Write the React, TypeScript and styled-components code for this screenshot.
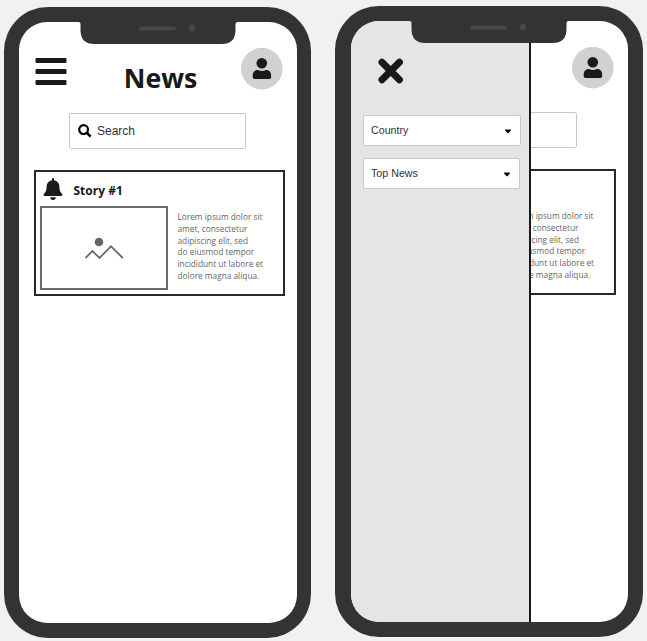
import React from "react";
import styled, { createGlobalStyle } from "styled-components";

const GlobalStyle = createGlobalStyle`
  * { box-sizing: border-box; }
  body { margin: 0; background: #f1f1f1; overflow: hidden; }
`;

const Board = styled.main`
  display: flex;
  align-items: flex-start;
  gap: 24px;
  width: 647px;
  height: 641px;
  padding: 7px 0 0 4px;
  background: #f1f1f1;
`;

const Frame = styled.section<{ $raised?: boolean }>`
  position: relative;
  flex: none;
  width: ${(p) => (p.$raised ? 308 : 307)}px;
  height: 631px;
  margin-top: ${(p) => (p.$raised ? -1 : 0)}px;
  padding: ${(p) => (p.$raised ? "15px 15px 15px 16px" : "15px 14px 15px 15px")};
  border-radius: 44px;
  background: #333;
`;

const Screen = styled.div`
  position: relative;
  width: 100%;
  height: 601px;
  overflow: hidden;
  border-radius: 28px;
  background: #fff;
`;

const Notch = styled.svg`
  position: absolute;
  left: 50%;
  top: 14px;
  width: 159px;
  height: 23px;
  transform: translateX(-79.5px);
`;

const Page = styled.div<{ $shifted?: boolean }>`
  width: 278px;
  margin-left: ${(p) => (p.$shifted ? -1 : 0)}px;
`;

const Header = styled.header`
  display: flex;
  align-items: flex-start;
  height: 91px;
  padding: 26px 14px 0 16px;
`;

const MenuIcon = styled.svg`
  flex: none;
  width: 32px;
  height: 28px;
  margin-top: 10px;
`;

const Title = styled.h1`
  flex: 1;
  margin: 11px 0 0;
  padding-left: 13px;
  text-align: center;
  font: 700 26.7px/38px "Open Sans", sans-serif;
  color: #191919;
`;

const Avatar = styled.svg`
  flex: none;
  width: 42px;
  height: 42px;
`;

const SearchBox = styled.div`
  display: flex;
  align-items: center;
  width: 177px;
  height: 36px;
  margin-left: 50px;
  padding: 0 0 1px 7.5px;
  gap: 5.5px;
  border: 1px solid #c8c8c8;
  border-radius: 2px;
  font: 12px "Liberation Sans", sans-serif;
  color: #333;
`;

const Card = styled.article`
  width: 251px;
  height: 126px;
  margin: 21px 0 0 15px;
  border: 2px solid #292929;
`;

const CardHeader = styled.div`
  display: flex;
  align-items: center;
  gap: 11px;
  height: 34px;
  padding: 0 0 0 6.5px;
`;

const CardTitle = styled.h2`
  margin: 4px 0 0;
  font: 700 12px/18px "Open Sans", sans-serif;
  color: #191919;
`;

const CardBody = styled.div`
  display: flex;
  gap: 9.5px;
  padding-left: 4px;
`;

const Thumbnail = styled.div`
  display: flex;
  flex: none;
  width: 128px;
  height: 84px;
  border: 2px solid #6b6b6b;
`;

const Copy = styled.p`
  margin: 5px 0 0;
  white-space: pre-line;
  font: 8.3px/11.8px "Open Sans", sans-serif;
  color: #666;
`;

const Drawer = styled.aside`
  position: absolute;
  inset: 0 auto 0 0;
  display: flex;
  flex-direction: column;
  align-items: flex-start;
  width: 180px;
  padding: 36px 0 0 12px;
  border-right: 2px solid #191919;
  background: #e5e5e5;
`;

const CloseIcon = styled.svg`
  width: 28px;
  height: 28px;
  margin: 0 0 30px 14px;
`;

const Select = styled.div<{ $width: number }>`
  display: flex;
  align-items: center;
  justify-content: space-between;
  width: ${(p) => p.$width}px;
  height: 31px;
  margin-bottom: 12px;
  padding: 0 8px 1px 7px;
  border: 1px solid #c8c8c8;
  border-radius: 2px;
  background: #fff;
  font: 10.7px "Liberation Sans", sans-serif;
  color: #333;
`;

const CaretIcon = styled.svg`
  width: 8px;
  height: 5px;
  margin-top: 2px;
`;

const STORY = `Lorem ipsum dolor sit
amet, consectetur
adipiscing elit, sed
do eiusmod tempor
incididunt ut labore et
dolore magna aliqua.`;

function Caret() {
  return (
    <CaretIcon viewBox="0 0 8 5">
      <path d="M1.4.5h5.2q.8.2.3.9L4.7 3.9q-.7.6-1.4 0L1.1 1.4Q.6.7 1.4.5Z" fill="#0a092d" />
    </CaretIcon>
  );
}

function NewsPage({ shifted }: { shifted?: boolean }) {
  return (
    <Page $shifted={shifted}>
      <Header>
        <MenuIcon viewBox="0 0 32 28" fill="#191919">
          <rect x=".5" y="0" width="31" height="5" rx="1" />
          <rect x=".5" y="11" width="31" height="5" rx="1" />
          <rect x=".5" y="22" width="31" height="5" rx="1" />
        </MenuIcon>
        <Title>News</Title>
        <Avatar viewBox="0 0 42 42">
          <circle cx="20.8" cy="20.6" r="20.8" fill="#d1d1d1" />
          <circle cx="20.8" cy="15.2" r="5.3" fill="#191919" />
          <path
            d="M17 22q4 1.8 8 0c3.2-.2 5.1 2.2 5.1 5.3v1.9q0 1.8-1.8 1.8H13.5q-1.8 0-1.8-1.8v-1.9C11.7 24.2 13.8 21.8 17 22Z"
            fill="#191919"
          />
        </Avatar>
      </Header>
      <SearchBox>
        <svg width="14" height="14" viewBox="0 0 14 14" fill="none" stroke="#000">
          <circle cx="5.6" cy="5.6" r="4.4" strokeWidth="2.2" />
          <path d="m9 9 3.7 3.7" strokeWidth="2.5" />
        </svg>
        <span>Search</span>
      </SearchBox>
      <Card>
        <CardHeader>
          <svg width="20" height="22" viewBox="0 0 20 22" fill="#191919">
            <path d="M9 1a1 1 0 0 1 2 0v1.2c3.5.6 5.4 3.1 5.4 6.4 0 4.6 1.2 5.8 2.6 7.2.9.9.4 2.3-.9 2.3H1.9c-1.3 0-1.8-1.4-.9-2.3 1.4-1.4 2.6-2.6 2.6-7.2 0-3.3 1.9-5.8 5.4-6.4Z" />
            <path d="M7.3 19.3h5.4a2.7 2.7 0 0 1-5.4 0Z" />
          </svg>
          <CardTitle>Story #1</CardTitle>
        </CardHeader>
        <CardBody>
          <Thumbnail>
            <svg width="124" height="80" viewBox="0 0 124 80">
              <circle cx="57" cy="34" r="4.3" fill="#666" />
              <path d="m43.5 50 7-7 7 7L69 38.3 80.8 50" fill="none" stroke="#6b6b6b" strokeWidth="1.8" />
            </svg>
          </Thumbnail>
          <Copy>{STORY}</Copy>
        </CardBody>
      </Card>
    </Page>
  );
}

function Filters() {
  return (
    <Drawer>
      <CloseIcon viewBox="0 0 28 28">
        <path
          d="m5 5.3 17.4 17.4M22.4 5.3 5 22.7"
          stroke="#191919"
          strokeWidth="7"
          strokeLinecap="round"
        />
      </CloseIcon>
      <Select $width={158}>
        Country
        <Caret />
      </Select>
      <Select $width={157}>
        Top News
        <Caret />
      </Select>
    </Drawer>
  );
}

function Phone({ raised, children }: { raised?: boolean; children: React.ReactNode }) {
  return (
    <Frame $raised={raised}>
      <Screen>{children}</Screen>
      <Notch viewBox="0 0 159 23">
        <path d="M0 0v1q2 0 2 2v6Q2 23 16 23h127q14 0 14-14V3q0-2 2-2V0Z" fill="#333" />
        <rect x="60.5" y="5.5" width="37" height="4" rx="2" fill="#474747" />
        <circle cx="113.5" cy="7.3" r="3.5" fill="#474747" />
      </Notch>
    </Frame>
  );
}

export default function App() {
  return (
    <>
      <GlobalStyle />
      <Board>
        <Phone>
          <NewsPage />
        </Phone>
        <Phone raised>
          <NewsPage shifted />
          <Filters />
        </Phone>
      </Board>
    </>
  );
}
